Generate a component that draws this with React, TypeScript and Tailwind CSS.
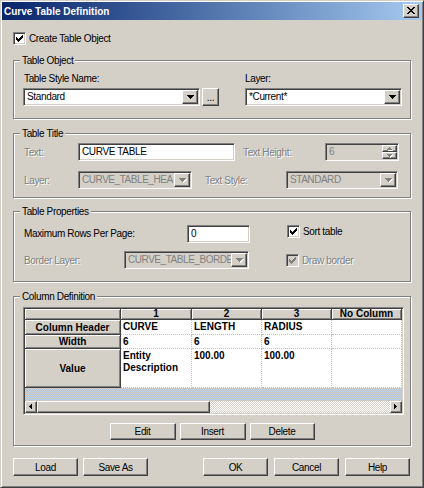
import React from 'react';

// Win2000-style bevels
const sunken =
  'border border-t-[#808080] border-l-[#808080] border-r-white border-b-white shadow-[inset_1px_1px_0_#404040,inset_-1px_-1px_0_#d4d0c8]';
const raised =
  'border border-t-white border-l-white border-r-[#404040] border-b-[#404040] shadow-[inset_-1px_-1px_0_#808080]';
const greyText = 'text-[#808080] [text-shadow:1px_1px_0_#fff]';

const DOWN = 'M0 0h7v1h-1v1h-1v1h-1v1h-1v-1h-1v-1h-1v-1h-1z';
const CHECK =
  'M6 0h1v1h-1z M5 1h2v1h-2z M0 2h1v1h-1z M4 2h3v1h-3z M0 3h2v1h-2z M3 3h3v1h-3z M0 4h5v1h-5z M1 5h3v1h-3z M2 6h1v1h-1z';
const CLOSE =
  'M0 0h2v1h-2z M6 0h2v1h-2z M1 1h2v1h-2z M5 1h2v1h-2z M2 2h4v1h-4z M3 3h2v1h-2z M2 4h4v1h-4z M1 5h2v1h-2z M5 5h2v1h-2z M0 6h2v1h-2z M6 6h2v1h-2z';

const Glyph = ({ d, w, h, disabled }: { d: string; w: number; h: number; disabled?: boolean }) => (
  <svg width={w + 1} height={h + 1} viewBox={`0 0 ${w + 1} ${h + 1}`} shapeRendering="crispEdges">
    {disabled && <path d={d} transform="translate(1 1)" fill="#fff" />}
    <path d={d} fill={disabled ? '#808080' : '#000'} />
  </svg>
);

const Combo = ({ value, className = '', disabled }: { value: string; className?: string; disabled?: boolean }) => (
  <div className={`${sunken} flex h-[18px] p-[1px] ${disabled ? 'bg-[#d4d0c8]' : 'bg-white'} ${className}`}>
    <div
      className={`flex-1 overflow-hidden whitespace-nowrap pl-[2px] leading-[14px] ${
        disabled ? 'text-[#808080] tracking-[-0.45px]' : 'text-black'
      }`}
    >
      {value}
    </div>
    <div className={`${raised} flex h-[14px] w-[16px] items-center justify-center bg-[#d4d0c8] pl-[1px] pt-[1px]`}>
      <Glyph d={DOWN} w={7} h={4} disabled={disabled} />
    </div>
  </div>
);

const TextBox = ({ value, className = '' }: { value: string; className?: string }) => (
  <div className={`${sunken} h-[18px] overflow-hidden whitespace-nowrap bg-white pl-[3px] leading-[16px] ${className}`}>
    {value}
  </div>
);

const Spin = ({ value, className = '' }: { value: string; className?: string }) => (
  <div className={`${sunken} flex h-[18px] bg-[#d4d0c8] p-[1px] ${className}`}>
    <div className="flex-1 pl-[2px] leading-[14px] text-[#808080]">{value}</div>
    <div className="flex w-[15px] flex-col">
      <div className={`${raised} flex h-[7px] items-center justify-center`}>
        <Glyph d="M2 0h1v1h1v1h1v1h-5v-1h1v-1h1z" w={5} h={3} disabled />
      </div>
      <div className={`${raised} flex h-[7px] items-center justify-center`}>
        <Glyph d="M0 0h5v1h-1v1h-1v1h-1v-1h-1v-1h-1z" w={5} h={3} disabled />
      </div>
    </div>
  </div>
);

const CheckBox = ({ label, disabled }: { label: string; disabled?: boolean }) => (
  <div className="flex items-center gap-[3px]">
    <div
      className={`${sunken} flex h-[13px] w-[13px] items-center justify-center ${
        disabled ? 'bg-[#d4d0c8]' : 'bg-white'
      }`}
    >
      <svg width="7" height="7" viewBox="0 0 7 7" shapeRendering="crispEdges">
        <path d={CHECK} fill={disabled ? '#808080' : '#000'} />
      </svg>
    </div>
    <span className={`leading-[13px] ${disabled ? greyText : ''}`}>{label}</span>
  </div>
);

const Button = ({ children, className = '' }: { children: React.ReactNode; className?: string }) => (
  <div className={`${raised} flex items-center justify-center bg-[#d4d0c8] leading-[13px] ${className}`}>
    {children}
  </div>
);

const Group = ({ label, className = '', children }: { label: string; className?: string; children: React.ReactNode }) => (
  <div className={`relative border border-[#808080] shadow-[1px_1px_0_#fff,inset_1px_1px_0_#fff] ${className}`}>
    <span className="absolute -top-[7px] left-[6px] bg-[#d4d0c8] px-[2px] leading-[13px]">{label}</span>
    {children}
  </div>
);

const colWidths = ['w-[96px]', 'w-[71px]', 'w-[70px]', 'w-[70px]', 'w-[70px]'];
const headCell =
  'flex items-center justify-center border-r border-b border-[#404040] bg-[#d4d0c8] shadow-[inset_1px_1px_0_#fff,inset_-1px_-1px_0_#808080]';
const dataCell = 'border-r border-b border-dotted border-[#c0c0c0] bg-white px-[2px]';

const rows = [
  { name: 'Column Header', h: 'h-[15px]', cells: ['CURVE', 'LENGTH', 'RADIUS', ''] },
  { name: 'Width', h: 'h-[14px]', cells: ['6', '6', '6', ''] },
  { name: 'Value', h: 'h-[39px]', cells: ['Entity Description', '100.00', '100.00', ''] },
];

const ColumnGrid = () => (
  <div className={`${sunken} ml-[9px] h-[108px] w-[381px] bg-white p-[1px]`}>
    <div className="flex h-full flex-col text-[10px] font-bold tracking-normal">
      <div className="flex h-[11px]">
        {['', '1', '2', '3', 'No Column'].map((t, i) => (
          <div key={i} className={`${headCell} ${colWidths[i]} leading-[10px]`}>
            {t}
          </div>
        ))}
      </div>
      {rows.map((r) => (
        <div key={r.name} className={`flex ${r.h}`}>
          <div className={`${headCell} ${colWidths[0]}`}>{r.name}</div>
          {r.cells.map((c, i) => (
            <div
              key={i}
              className={`${dataCell} ${colWidths[i + 1]} ${
                r.name === 'Value' ? 'pt-[1px] leading-[12px]' : 'flex items-center leading-[12px]'
              }`}
            >
              {c}
            </div>
          ))}
        </div>
      ))}
      <div className="h-[13px] bg-[repeating-conic-gradient(#d4d0c8_0_25%,#aec6e2_0_50%)] bg-[length:2px_2px]" />
      <div className="flex h-[12px]">
        <div className={`${raised} flex w-[12px] items-center justify-center bg-[#d4d0c8]`}>
          <Glyph d="M2 0h1v5h-1v-1h-1v-1h-1v-1h1v-1h1z" w={3} h={5} />
        </div>
        <div className={`${raised} w-[173px] bg-[#d4d0c8]`} />
        <div className="flex-1 bg-[repeating-conic-gradient(#ffffff_0_25%,#d4d0c8_0_50%)] bg-[length:2px_2px]" />
        <div className={`${raised} flex w-[12px] items-center justify-center bg-[#d4d0c8]`}>
          <Glyph d="M0 0h1v1h1v1h1v1h-1v1h-1v1h-1z" w={3} h={5} />
        </div>
      </div>
    </div>
  </div>
);

export default function App() {
  return (
    <div
      className={`h-[488px] w-[424px] overflow-hidden border border-t-[#d4d0c8] border-l-[#d4d0c8] border-r-[#404040] border-b-[#404040] bg-[#d4d0c8] text-[10px] tracking-[-0.35px] text-black shadow-[inset_1px_1px_0_#fff,inset_-1px_-1px_0_#808080] font-['Liberation_Sans',Arial,sans-serif]`}
    >
      {/* Title bar */}
      <div className="mx-[1px] mt-[1px] flex h-[18px] items-center justify-between bg-linear-to-r from-[#0a246a] to-[#a6caf0] pl-[2px] pr-[3px]">
        <span className="text-[10px] font-bold tracking-normal text-white">Curve Table Definition</span>
        <div className={`${raised} flex h-[14px] w-[16px] items-center justify-center bg-[#d4d0c8]`}>
          <Glyph d={CLOSE} w={8} h={7} />
        </div>
      </div>

      <div className="px-[12px]">
        <div className="mt-[12px]">
          <CheckBox label="Create Table Object" />
        </div>

        {/* Table Object */}
        <Group label="Table Object" className="mt-[15px] h-[59px]">
          <div className="flex pl-[9px] pt-[11px]">
            <div className="w-[222px]">
              <div className="pl-[1px] leading-[13px]">Table Style Name:</div>
              <div className="mt-[3px] flex gap-[2px]">
                <Combo value="Standard" className="w-[177px]" />
                <Button className="h-[18px] w-[17px]">...</Button>
              </div>
            </div>
            <div>
              <div className="leading-[13px]">Layer:</div>
              <Combo value="*Current*" className="mt-[3px] w-[157px]" />
            </div>
          </div>
        </Group>

        {/* Table Title */}
        <Group label="Table Title" className="mt-[14px] h-[65px]">
          <div className="flex flex-col gap-[10px] pl-[9px] pt-[9px]">
            <div className="flex h-[18px] items-center">
              <span className={`w-[55px] pl-[1px] ${greyText}`}>Text:</span>
              <TextBox value="CURVE TABLE" className="w-[157px]" />
              <span className={`ml-[8px] w-[82px] ${greyText}`}>Text Height:</span>
              <Spin value="6" className="w-[74px]" />
            </div>
            <div className="flex h-[18px] items-center">
              <span className={`w-[55px] pl-[1px] ${greyText}`}>Layer:</span>
              <Combo disabled value="CURVE_TABLE_HEA" className="w-[114px]" />
              <span className={`ml-[13px] w-[81px] ${greyText}`}>Text Style:</span>
              <Combo disabled value="STANDARD" className="w-[112px]" />
            </div>
          </div>
        </Group>

        {/* Table Properties */}
        <Group label="Table Properties" className="mt-[13px] h-[71px]">
          <div className="flex flex-col gap-[8px] pl-[9px] pt-[13px]">
            <div className="flex items-start">
              <span className="w-[164px] pl-[1px] leading-[18px]">Maximum Rows Per Page:</span>
              <TextBox value="0" className="w-[63px]" />
              <div className="ml-[37px]">
                <CheckBox label="Sort table" />
              </div>
            </div>
            <div className="flex h-[18px] items-center">
              <span className={`w-[101px] pl-[1px] ${greyText}`}>Border Layer:</span>
              <Combo disabled value="CURVE_TABLE_BORDE" className="w-[125px]" />
              <div className="ml-[37px]">
                <CheckBox label="Draw border" disabled />
              </div>
            </div>
          </div>
        </Group>

        {/* Column Definition */}
        <Group label="Column Definition" className="mt-[14px] h-[150px]">
          <div className="pt-[10px]">
            <ColumnGrid />
            <div className="mt-[8px] flex justify-center gap-[4px]">
              <Button className="h-[17px] w-[66px]">Edit</Button>
              <Button className="h-[17px] w-[66px]">Insert</Button>
              <Button className="h-[17px] w-[65px]">Delete</Button>
            </div>
          </div>
        </Group>

        {/* Dialog buttons */}
        <div className="mt-[12px] flex justify-between pr-[1px]">
          <div className="flex gap-[5px]">
            <Button className="h-[18px] w-[65px]">Load</Button>
            <Button className="h-[18px] w-[65px]">Save As</Button>
          </div>
          <div className="flex gap-[6px]">
            <Button className="h-[18px] w-[65px]">OK</Button>
            <Button className="h-[18px] w-[65px]">Cancel</Button>
            <Button className="h-[18px] w-[65px]">Help</Button>
          </div>
        </div>
      </div>
    </div>
  );
}
